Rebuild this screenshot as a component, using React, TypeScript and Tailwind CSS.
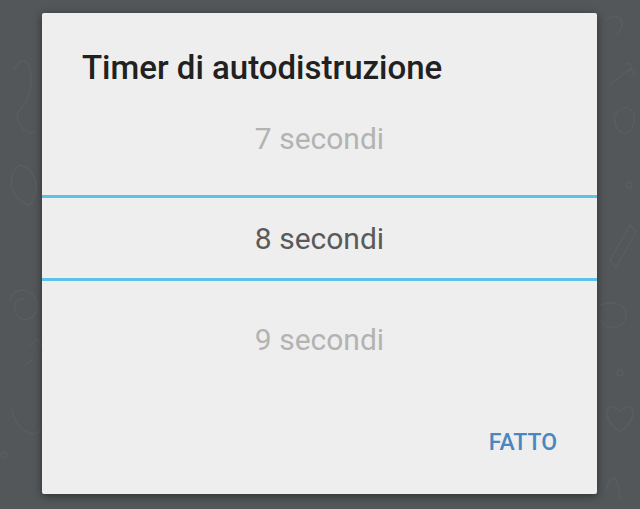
import React from "react";

function Doodles() {
  return (
    <svg
      className="absolute inset-0 pointer-events-none"
      width="640"
      height="509"
      viewBox="0 0 640 509"
      fill="none"
      stroke="#5a5e61"
      strokeWidth="1.3"
      strokeLinecap="round"
      strokeLinejoin="round"
    >
      <path d="M14 70 C 30 40, 40 90, 20 110 C 10 120, 30 140, 36 130" />
      <path d="M20 165 C 5 175, 10 200, 30 205 C 40 190, 38 170, 20 165 Z" />
      <path d="M25 300 C 15 295, 10 310, 20 318 C 30 324, 40 312, 36 300 C 32 288, 14 286, 10 300" />
      <path d="M30 345 l 8 -6 l 6 12 M32 360 l -8 6" />
      <path d="M12 410 C 15 430, 35 440, 40 430" />
      <circle cx="4" cy="455" r="3" />
      <path d="M605 20 C 620 10, 630 25, 615 35" />
      <path d="M610 85 L 628 70 M626 64 c 6 -2 8 6 2 8 M628 70 c 4 -3 10 2 4 6" />
      <path d="M615 115 C 625 100, 640 110, 632 128 C 626 140, 612 130, 615 115 Z" />
      <circle cx="629" cy="185" r="3" />
      <path d="M610 260 L 630 225 L 636 232 L 616 268 Z" />
      <path d="M600 305 C 615 300, 630 305, 625 320 C 620 330, 605 330, 600 320" />
      <circle cx="620" cy="373" r="3" />
      <path d="M612 425 C 600 410, 612 400, 620 412 C 628 400, 640 410, 628 425 L 620 432 Z" />
      <path d="M606 490 C 610 475, 618 470, 620 500" />
    </svg>
  );
}

export default function App() {
  return (
    <div
      className="relative w-[640px] h-[509px] overflow-hidden bg-[#53575a] pt-[13px] pl-[42px]"
      style={{ fontFamily: "Roboto, 'Noto Sans', sans-serif" }}
    >
      <Doodles />
      <div className="relative w-[555px] h-[481px] bg-[#eeeeee] rounded-[2px] shadow-[0_2px_8px_rgba(0,0,0,0.45)] flex flex-col">
        <div className="pt-[35px] pl-[40px] text-[33px] leading-[40px] font-medium text-[#212121]">
          Timer di autodistruzione
        </div>
        <div className="h-[102px] flex items-center justify-center text-[30px] leading-[36px] text-[#b3b3b3]">
          7 secondi
        </div>
        <div className="mt-[5px] h-[3px] bg-[#5ec1e8]" />
        <div className="h-[80px] pt-[2px] flex items-center justify-center text-[30px] leading-[36px] text-[#5a5a5a]">
          8 secondi
        </div>
        <div className="h-[3px] bg-[#5ec1e8]" />
        <div className="h-[118px] flex items-center justify-center text-[30px] leading-[36px] text-[#b3b3b3]">
          9 secondi
        </div>
        <div className="pt-[34px] pr-[40px] flex justify-end">
          <span className="text-[23px] leading-[20px] font-medium text-[#4a86c0]">FATTO</span>
        </div>
      </div>
    </div>
  );
}
